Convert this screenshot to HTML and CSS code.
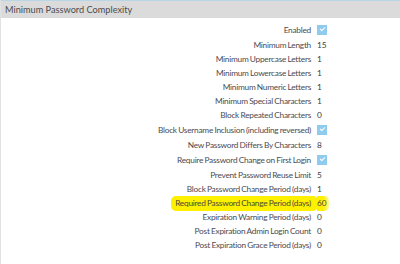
FILE: index.html
```html
<!DOCTYPE html>
<html lang="en">
<head>
  <meta charset="UTF-8" />
  <title>Minimum Password Complexity</title>
  <link rel="stylesheet" href="styles.css">
</head>
<body>
  <div class="panel">
    <div class="panel-head">Minimum Password Complexity</div>

    <div class="panel-body">
      <div class="row cb"><span class="label">Enabled</span><span class="check"></span></div>
      <div class="row"><span class="label">Minimum Length</span><span class="value">15</span></div>
      <div class="row"><span class="label">Minimum Uppercase Letters</span><span class="value">1</span></div>
      <div class="row"><span class="label">Minimum Lowercase Letters</span><span class="value">1</span></div>
      <div class="row"><span class="label">Minimum Numeric Letters</span><span class="value">1</span></div>
      <div class="row"><span class="label">Minimum Special Characters</span><span class="value">1</span></div>
      <div class="row"><span class="label">Block Repeated Characters</span><span class="value">0</span></div>
      <div class="row cb"><span class="label">Block Username Inclusion (including reversed)</span><span class="check"></span></div>
      <div class="row"><span class="label">New Password Differs By Characters</span><span class="value">8</span></div>
      <div class="row cb"><span class="label">Require Password Change on First Login</span><span class="check"></span></div>
      <div class="row"><span class="label">Prevent Password Reuse Limit</span><span class="value">5</span></div>
      <div class="row"><span class="label">Block Password Change Period (days)</span><span class="value">1</span></div>
      <div class="row hl"><span class="label"><mark>Required Password Change Period (days)</mark></span><span class="value"><mark>60</mark></span></div>
      <div class="row"><span class="label">Expiration Warning Period (days)</span><span class="value">0</span></div>
      <div class="row"><span class="label">Post Expiration Admin Login Count</span><span class="value">0</span></div>
      <div class="row"><span class="label">Post Expiration Grace Period (days)</span><span class="value">0</span></div>
    </div>
  </div>
</body>
</html>
```

FILE: styles.css
```css
body {
  margin: 0;
  font-family: Lato, "Open Sans", sans-serif;
  font-size: 8.3px;
  color: #4a4a4a;
  background-color: #ffffff;
}
.panel {
  width: 400px;
  height: 264px;
  border-left: 1px solid #e2e2e2;
  box-sizing: border-box;
}
.panel-head {
  height: 17px;
  line-height: 17px;
  padding-left: 4px;
  background-color: #dbdbdb;
  border-top: 1px solid #b9d6e6;
  color: #4c4c4c;
  font-size: 9.2px;
}
.panel-body {
  padding-top: 4px;
}
.row {
  display: grid;
  grid-template-columns: 310px 1fr;
  column-gap: 6px;
  height: 14px;
  align-items: center;
  white-space: nowrap;
}
.row.cb {
  height: 16px;
}
.label {
  text-align: right;
  color: #4b4b52;
  letter-spacing: -0.25px;
  word-spacing: -0.5px;
}
.value {
  color: #3c3c3c;
}
.check {
  display: block;
  width: 10px;
  height: 10px;
  background-color: #8ecbee;
  position: relative;
}
.check::after {
  content: "";
  position: absolute;
  left: 3px;
  top: 2px;
  width: 4px;
  height: 2px;
  border-left: 1px solid #ffffff;
  border-bottom: 1px solid #ffffff;
  transform: rotate(-45deg);
}
mark {
  background-color: #fdf000;
  color: #4a4a3a;
  border-radius: 5px;
  padding: 2px 7px 3px 4px;
  margin-right: -7px;
}
.value mark {
  border-radius: 0 5px 5px 0;
  padding: 2px 2px 3px 0;
  margin-right: 0;
  background: linear-gradient(to right, #fdf000 50%, rgba(253, 240, 0, 0.4));
}
```
